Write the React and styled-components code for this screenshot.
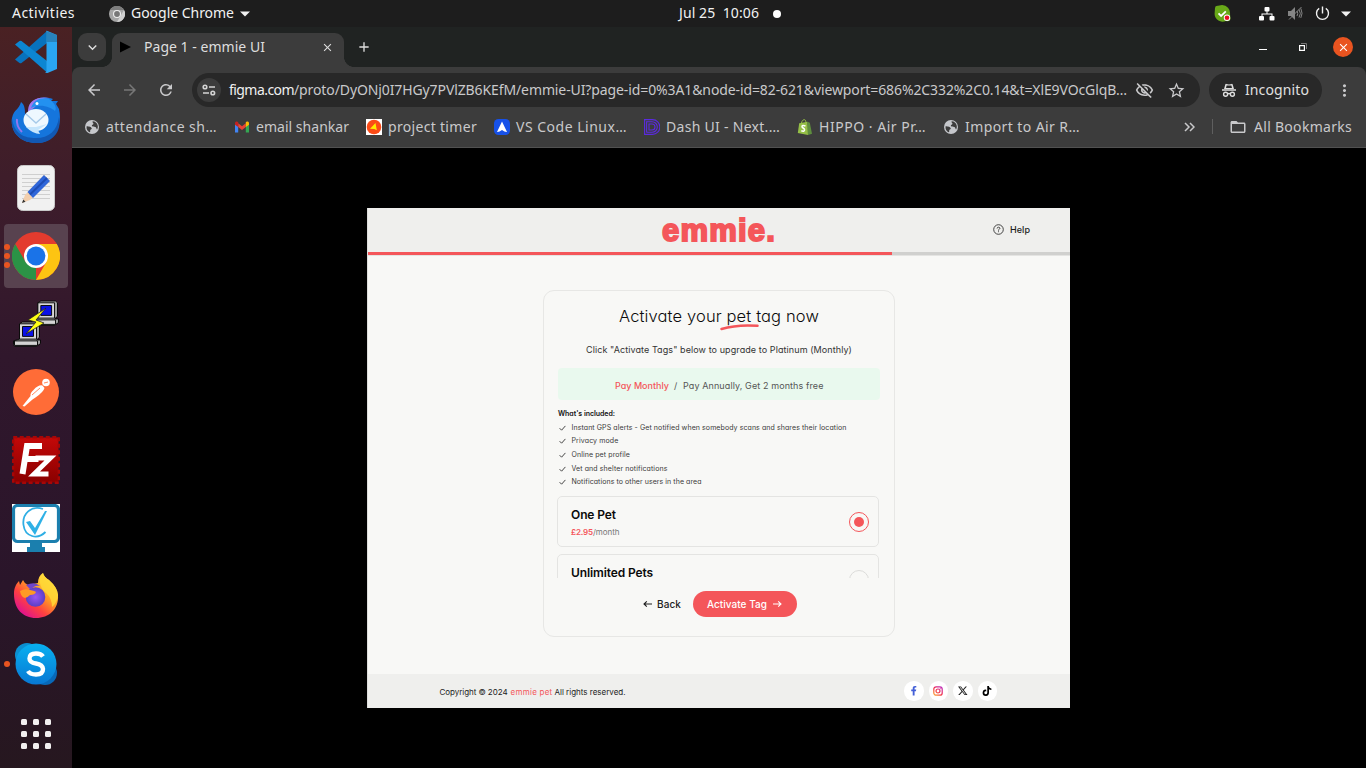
import React, { useLayoutEffect, useRef, useState } from 'react';
import styled, { createGlobalStyle } from 'styled-components';
import {
  MdArrowBack, MdArrowForward, MdRefresh, MdStarBorder, MdMoreVert, MdOutlineVisibilityOff,
  MdFolderOpen, MdAdd, MdClose, MdKeyboardArrowDown,
} from 'react-icons/md';
import { FaFacebookF, FaTiktok } from 'react-icons/fa';
import { BsTwitterX } from 'react-icons/bs';

const Global = createGlobalStyle`
  * { box-sizing: border-box; }
  body { margin: 0; background: #000; overflow: hidden; }
  svg { display: block; flex: none; }
`;

const SYSTEM = '"Noto Sans", "Open Sans", sans-serif';
const APP = 'Inter, "Liberation Sans", sans-serif';
const RED = '#f4565a';

/* ---------- text that tracks itself out to a given measure ---------- */
const Measure = styled.span`
  display: block;
  flex: none;
  width: ${(p) => p.$w}px;
  margin-left: ${(p) => p.$ml || 0}px;
  white-space: pre;
  font-size: ${(p) => p.$size}px;
  font-weight: ${(p) => p.$weight || 400};
  color: ${(p) => p.$color || 'inherit'};
`;

function Text({ w, size = 14, weight, color, ml, children }) {
  const ref = useRef(null);
  const [spacing, setSpacing] = useState(0);
  useLayoutEffect(() => {
    const natural = ref.current.getBoundingClientRect().width;
    setSpacing((w - natural) / children.length);
  }, [w, children]);
  return (
    <Measure $w={w} $size={size} $weight={weight} $color={color} $ml={ml}>
      <span ref={ref} style={{ letterSpacing: spacing }}>{children}</span>
    </Measure>
  );
}

/* ---------- desktop ---------- */
const Desktop = styled.div`
  width: 1366px;
  height: 768px;
  display: flex;
  flex-direction: column;
  overflow: hidden;
  background: #000;
  font-family: ${SYSTEM};
`;
const TopBar = styled.header`
  height: 27px;
  flex: none;
  display: flex;
  align-items: center;
  padding: 0 15px 0 12px;
  background: #1d1d1d;
  color: #f2f2f2;
  ${Measure} { padding-bottom: 2px; }
`;
const AppMenu = styled.div`
  display: flex;
  align-items: center;
  gap: 6px;
  margin-left: 34px;
`;
const Clock = styled.div`
  display: flex;
  align-items: center;
  margin-left: 429px;
`;
const Dot = styled.i`
  width: 8px;
  height: 8px;
  border-radius: 50%;
  background: #fff;
  margin-left: 14px;
`;
const Tray = styled.div`
  display: flex;
  align-items: center;
  margin-left: auto;
`;
const TrayItem = styled.div`margin-left: ${(p) => p.$gap}px;`;
const Main = styled.div`
  display: flex;
  flex: 1;
  min-height: 0;
`;

/* ---------- dock ---------- */
const Dock = styled.nav`
  width: 72px;
  flex: none;
  display: flex;
  flex-direction: column;
  align-items: center;
  gap: 4px;
  overflow: hidden;
  background: linear-gradient(#4a2123 0, #421f28 90px, #3a1b2c 210px, #30172c 330px, #2a152a 560px, #26171f 741px);
`;
const DockItem = styled.div`
  position: relative;
  width: 64px;
  height: 64px;
  flex: none;
  display: flex;
  align-items: center;
  justify-content: center;
  border-radius: 4px;
  background: ${(p) => (p.$active ? '#58424f' : 'transparent')};
  &:first-child { margin-top: -7px; }
  &:last-child { margin-top: 2px; }
`;
const Running = styled.div`
  position: absolute;
  left: 0;
  top: 0;
  height: 64px;
  display: flex;
  flex-direction: column;
  justify-content: center;
  gap: 3px;
  i { width: 6px; height: 6px; border-radius: 50%; background: #e95420; }
`;
const AppsGrid = styled.div`
  display: grid;
  grid-template-columns: repeat(3, 6px);
  gap: 6px;
  i { width: 6px; height: 6px; border-radius: 1.5px; background: #f2f0f0; }
`;

/* ---------- browser ---------- */
const Browser = styled.section`
  flex: 1;
  min-width: 0;
  display: flex;
  flex-direction: column;
  background: #202322;
  color: #c9c9cb;
`;
const TabStrip = styled.div`
  height: 40px;
  flex: none;
  display: flex;
  align-items: flex-end;
  padding-left: 6px;
  color: #dedede;
  ${Measure} { padding-bottom: 2px; }
`;
const TabSearch = styled.div`
  width: 28px;
  height: 28px;
  margin-bottom: 6px;
  border-radius: 9px;
  display: flex;
  align-items: center;
  justify-content: center;
  background: #3c3c3c;
`;
const Tab = styled.div`
  position: relative;
  width: 232px;
  height: 34px;
  margin-left: 6px;
  padding: 0 10px 6px 8px;
  border-radius: 9px 9px 0 0;
  display: flex;
  align-items: center;
  background: #3c3c3c;
  &::before, &::after {
    content: '';
    position: absolute;
    bottom: 0;
    width: 10px;
    height: 10px;
  }
  &::before { left: -10px; background: radial-gradient(circle at 0 0, transparent 9.6px, #3c3c3c 10.2px); }
  &::after { right: -10px; background: radial-gradient(circle at 100% 0, transparent 9.6px, #3c3c3c 10.2px); }
`;
const TabClose = styled.div`margin-left: auto;`;
const NewTab = styled.div`margin: 0 0 12px 12px;`;
const WindowControls = styled.div`
  display: flex;
  align-items: center;
  height: 40px;
  margin-left: auto;
  padding-right: 13px;
`;
const CloseWindow = styled.div`
  width: 20px;
  height: 20px;
  margin-left: 26px;
  border-radius: 50%;
  display: flex;
  align-items: center;
  justify-content: center;
  background: #e95420;
  color: #fff;
`;
const Chrome = styled.div`
  flex: none;
  height: 81px;
  background: #3c3c3c;
  border-radius: 8px 8px 0 0;
  border-bottom: 1px solid #515151;
  ${Measure} { padding-bottom: 2px; }
`;
const Toolbar = styled.div`
  height: 46px;
  display: flex;
  align-items: center;
  padding: 0 10px 0 13px;
`;
const NavButtons = styled.div`
  display: flex;
  gap: 18px;
  width: 107px;
  flex: none;
`;
const Omnibox = styled.div`
  width: 1008px;
  flex: none;
  height: 34px;
  border-radius: 17px;
  display: flex;
  align-items: center;
  padding: 0 14px 0 5px;
  background: #282828;
`;
const SiteInfo = styled.div`
  width: 24px;
  height: 24px;
  margin-right: 8px;
  border-radius: 50%;
  display: flex;
  align-items: center;
  justify-content: center;
  background: #3c3c3c;
`;
const OmniActions = styled.div`
  display: flex;
  align-items: center;
  gap: 13px;
  margin-left: auto;
`;
const Incognito = styled.div`
  width: 113px;
  flex: none;
  height: 34px;
  margin: 0 13px 0 9px;
  padding-left: 12px;
  border-radius: 17px;
  display: flex;
  align-items: center;
  gap: 8px;
  background: #282828;
  color: #e0e0e0;
`;
const BookmarkBar = styled.div`
  height: 28px;
  display: flex;
  align-items: center;
  padding: 0 14px 1px 12px;
  ${Measure} { padding-bottom: 1px; }
`;
const Bookmark = styled.div`
  display: flex;
  align-items: center;
  gap: 6px;
  margin-right: 17px;
  svg { width: 16px; height: 16px; }
`;
const BookmarkEnd = styled.div`
  display: flex;
  align-items: center;
  margin-left: auto;
`;
const Divider = styled.i`
  width: 1.5px;
  height: 15px;
  margin: 0 16px 0 17px;
  background: #5f5f5f;
`;
const Viewport = styled.div`
  flex: 1;
  background: #000;
  padding: 60px 0 0 295px;
`;

/* ---------- emmie page ---------- */
const Page = styled.article`
  width: 703px;
  height: 500px;
  display: flex;
  flex-direction: column;
  background: #f8f8f6;
  color: #1c1c1c;
  font-family: ${APP};
  font-feature-settings: 'cv11' 1;
  border-left: 1px solid #dededc;
`;
const PageHeader = styled.header`
  height: 44px;
  flex: none;
  display: grid;
  grid-template-columns: 1fr 114px 1fr;
  align-items: center;
  background: #efefed;
`;
const Logo = styled.div`
  grid-column: 2;
  line-height: 30px;
  padding-top: 1px;
  font-family: "Liberation Sans", Arial, sans-serif;
  color: ${RED};
  -webkit-text-stroke: 1.9px ${RED};
`;
const Help = styled.div`
  display: flex;
  align-items: center;
  justify-self: end;
  gap: 6px;
  padding: 0 40px 1px 0;
`;
const Progress = styled.div`
  height: 4px;
  flex: none;
  background: #d0d0ce;
  border-bottom: 1px solid #e4e4e2;
`;
const ProgressFill = styled.div`
  width: 524px;
  height: 3px;
  background: ${RED};
`;
const Content = styled.main`
  flex: 1;
  display: flex;
  justify-content: center;
  padding-top: 34px;
`;
const Card = styled.div`
  width: 352px;
  height: 347px;
  padding: 0 14px;
  border: 1px solid #e7e7e5;
  border-radius: 11px;
  display: flex;
  flex-direction: column;
`;
const Title = styled.h1`
  position: relative;
  align-self: center;
  margin: 14px 0 0;
  line-height: 22px;
  color: #0b0b0b;
  svg { position: absolute; left: 101px; top: 18px; }
`;
const Subtitle = styled.p`
  align-self: center;
  margin: 16px 0 0;
  line-height: 14px;
  color: #333;
`;
const Billing = styled.div`
  height: 32px;
  flex: none;
  margin: 11px 0 0;
  border-radius: 4px;
  display: flex;
  align-items: center;
  padding: 2px 0 0 57px;
  background: #e9f9ee;
  color: #555;
`;
const Included = styled.ul`
  list-style: none;
  margin: 7px 0 0;
  padding: 0;
`;
const IncludedItem = styled.li`
  height: 13.7px;
  line-height: 13.7px;
  display: flex;
  align-items: center;
  color: #3a3a3a;
  svg { margin: 0 5.5px 0 1px; }
`;
const Plans = styled.div`
  height: 82px;
  margin: 7px 1px 0 -1px;
  overflow: hidden;
  flex: none;
`;
const Plan = styled.div`
  height: 51px;
  margin-bottom: 7px;
  padding: 0 9px 0 13px;
  border: 1px solid #e4e4e2;
  border-radius: 5px;
  display: flex;
  align-items: center;
  justify-content: space-between;
`;
const PlanInfo = styled.div`
  height: 32px;
  font-feature-settings: normal;
`;
const PlanName = styled.div`
  padding-top: 1px;
  line-height: 16px;
  color: #0a0a0a;
`;
const PlanPrice = styled.div`
  display: flex;
  margin-top: 3px;
  line-height: 12px;
  color: #777;
`;
const Radio = styled.div`
  width: 20px;
  height: 20px;
  border-radius: 50%;
  border: 1.4px solid ${(p) => (p.$on ? RED : '#dcdcda')};
  display: flex;
  align-items: center;
  justify-content: center;
  &::after {
    content: '';
    width: 10px;
    height: 10px;
    border-radius: 50%;
    background: ${(p) => (p.$on ? RED : 'transparent')};
  }
`;
const Actions = styled.div`
  display: flex;
  align-items: center;
  margin: 13px 0 0 85px;
  font-feature-settings: normal;
`;
const BackButton = styled.div`
  display: flex;
  align-items: center;
  gap: 5px;
`;
const Activate = styled.div`
  width: 104px;
  height: 26px;
  margin-left: 12px;
  padding-left: 14px;
  border-radius: 13px;
  display: flex;
  align-items: center;
  gap: 6px;
  background: ${RED};
  color: #fff;
`;
const PageFooter = styled.footer`
  height: 34px;
  flex: none;
  display: flex;
  align-items: center;
  justify-content: space-between;
  padding: 0 73px 0 71.5px;
  background: #efefed;
`;
const Copyright = styled.div`
  display: flex;
  padding-top: 1px;
  color: #222;
`;
const Socials = styled.div`display: flex; gap: 5px;`;
const Social = styled.div`
  width: 19.5px;
  height: 19.5px;
  border-radius: 50%;
  display: flex;
  align-items: center;
  justify-content: center;
  background: #fff;
  color: ${(p) => p.$color};
`;

/* ---------- drawings ---------- */
const Caret = () => <svg width="10" height="6"><path d="M0 .5h10L5 5.5z" fill="#f2f2f2" /></svg>;

const ChromeGrey = () => (
  <svg width="16" height="16" viewBox="0 0 16 16">
    <circle cx="8" cy="8" r="8" fill="#a5a5a5" />
    <path d="M1 4a8 8 0 0 1 14 0H8z" fill="#7d7d7d" />
    <path d="M15 4a8 8 0 0 1-7 12l3.5-6z" fill="#d0d0d0" />
    <circle cx="8" cy="8" r="4" fill="#eee" /><circle cx="8" cy="8" r="2.9" fill="#777" />
  </svg>
);
const SkypeTray = () => (
  <svg width="17" height="17" viewBox="0 0 17 17">
    <path d="M1 3Q1 .5 4 .7L8 0a8 8 0 0 1 8 9l.5 5Q16 17 12 16A8 8 0 0 1 .6 9z" fill="#68a818" />
    <path d="M4.5 8.3l2.6 2.6 4.7-4.5" stroke="#fff" strokeWidth="1.8" fill="none" />
    <circle cx="13" cy="12.8" r="3.2" fill="#fff" /><circle cx="13" cy="12.8" r="2.3" fill="#e81123" />
  </svg>
);
const Network = () => (
  <svg width="16" height="14" fill="#fff">
    <rect x="5.5" y="0" width="5" height="4.4" rx="1" /><rect x="0" y="9" width="5" height="4.4" rx="1" /><rect x="10.5" y="9" width="5" height="4.4" rx="1" />
    <path d="M7.5 4h1v2.5h5V10h-1V7.5h-9V10h-1V6.5h5z" />
  </svg>
);
const Muted = () => (
  <svg width="15" height="15" fill="none" stroke="#858585">
    <path d="M0 5h3l4-4v13L3 10H0z" fill="#858585" stroke="none" />
    <path d="M1 13.5L13.5 1" strokeWidth="1" /><path d="M9 5q1.5 2.5 0 5M11 3.5q2.7 4 0 8M12.8 2.4q2.5 5 0 9.5" />
  </svg>
);
const Power = () => (
  <svg width="15" height="15" fill="none" stroke="#f2f2f2" strokeWidth="1.4">
    <path d="M4.2 2.4a6 6 0 1 0 6.6 0M7.5 .4v7" />
  </svg>
);
const Minimise = () => <svg width="8" height="6"><path d="M0 5.5h8" stroke="#fff" /></svg>;
const Restore = () => (
  <svg width="8" height="9" fill="none">
    <path d="M2 .5h5.5V6" stroke="#777" /><rect x=".6" y="2.6" width="4.8" height="4.8" stroke="#fff" strokeWidth="1.2" />
  </svg>
);
const SiteSettings = () => (
  <svg width="14" height="12" fill="none" stroke="#d4d4d4" strokeWidth="1.6">
    <circle cx="3" cy="3" r="1.8" /><path d="M7 3h6M1 9h6" /><circle cx="10.8" cy="9" r="1.8" />
  </svg>
);
const Spy = () => (
  <svg width="16" height="15" viewBox="0 0 16 15">
    <path d="M3 6L4.3 1.4Q4.6.6 5.4.9L8 1.6l2.6-.7q.8-.3 1.1.5L13 6z" fill="#dedede" />
    <path d="M5 5L5.6 2.6h4.8L11 5z" fill="#282828" /><path d="M1 7h14" stroke="#dedede" strokeWidth="1.5" />
    <g fill="none" stroke="#dedede" strokeWidth="1.4"><circle cx="4.6" cy="11.3" r="2" /><circle cx="11.4" cy="11.3" r="2" /><path d="M6.6 11q1.4-.9 2.8 0" /></g>
  </svg>
);
const Globe = () => (
  <svg viewBox="0 0 16 16">
    <circle cx="8" cy="8" r="7" fill="#c5c7cb" />
    <path d="M2.6 7.2c2 .2 5 .3 5.2 2.4 0 1-1.6.8-1.6 2 0 1 .1 1.8-.6 1.6A5.8 5.8 0 0 1 2.6 7.2zM8.6 2.3c2.5.1 4.6 1.8 5.1 4.2.3 1.6 0 3-.7 3.9-.8-.3-.4-1.9-1.6-2.3-1.5-.4-3.4-.3-3.6-1.6-.1-1 1.7-.7 1.7-1.8 0-.9-1.3-.7-.9-2.4z" fill="#3c3c3c" />
  </svg>
);
const Gmail = () => (
  <svg viewBox="0 0 16 16">
    <path d="M1 4v9.5h3.2V7.2z" fill="#4285f4" /><path d="M15 4v9.5h-3.2V7.2z" fill="#34a853" />
    <path d="M4.2 4.2L8 7.2l3.8-3v3.9L8 11 4.2 8.1z" fill="#ea4335" />
    <path d="M1 4.2C1 2.3 3 2 4.2 3v5.1L1 5.7z" fill="#c5221f" /><path d="M15 4.2C15 2.3 13 2 11.8 3v5.1L15 5.7z" fill="#fbbc04" />
  </svg>
);
const Timer = () => (
  <svg viewBox="0 0 16 16"><path d="M0 0h16v16H0z" fill="#fff" /><circle cx="8" cy="8" r="7.3" fill="#fb4b16" /><path d="M9.5 4l1.3 7.3-2.5-1.2-4.3-.4z" fill="#ffea00" /></svg>
);
const ArrowBlue = () => (
  <svg viewBox="0 0 16 16"><rect width="16" height="16" rx="4.5" fill="#1751e8" /><path d="M8 2.5l5 10.5q-2.2.2-5-2-2.8 2.2-5 2z" fill="#fff" /></svg>
);
const DashD = () => (
  <svg viewBox="0 0 16 16" fill="none" stroke="#5b2be0" strokeWidth="1.1">
    <path d="M0 .6h8.5a7.3 7.3 0 0 1 0 14.8H.6V.6M2.6 13.4V2.7H8a5.3 5.3 0 0 1 0 10.6H2.6M5 11V5h3a3 3 0 0 1 0 6z" />
  </svg>
);
const Bag = () => (
  <svg viewBox="0 0 16 16">
    <path d="M2.2 4.3l8.3-1.5L11 16 .8 14z" fill="#95bf47" /><path d="M10.5 2.8l2.3 1L15 14.8 11 16z" fill="#5e8e3e" />
    <path d="M4.3 4.5C4.8 1.5 6.5.3 7.8.8c1 .5 1 1.5 1 2.7" fill="none" stroke="#95bf47" strokeWidth="1" />
    <path d="M8.5 7Q5 5.7 5 7.7c0 1.3 2.7 1.4 2.6 3.2Q7.2 13 4.3 11.8" fill="none" stroke="#fff" strokeWidth="1.5" />
  </svg>
);
const Chevrons = () => <svg width="11" height="10" fill="none" stroke="#c9c9cb" strokeWidth="1.5"><path d="M1 1l4 4-4 4M6 1l4 4-4 4" /></svg>;

const VSCode = () => (
  <svg width="44" height="44" viewBox="0 0 44 44">
    <path d="M1 29.5L33 1v12L7.5 33q-1 .6-2 0z" fill="#0872bd" />
    <path d="M1 14.5L5.5 11q1-.6 2 0L33 31v11.5z" fill="#0c86d2" />
    <path d="M32 1q.5-.4 1.5 0L43 5v34l-9.5 4q-1.5.3-2.5-1 1.5.5 1.5-1.5v-38Q32.5 1 32 1z" fill="#2aa5f1" />
    <path d="M32 1l11 4v7H32.5z" fill="#2875a6" opacity=".7" />
  </svg>
);
const Thunderbird = () => (
  <svg width="50" height="50" viewBox="0 -1 50 50">
    <path d="M1 22C3 13 8 14 10 6c4 3 4 8 4 12l4-3C19 3 29-1 42 3l-2 2 7 0-2 3 3 5c4 18-5 34-22 34C9 47-1 36 1 22z" fill="#1575dc" />
    <path d="M1 22c2 16 12 20 24 20 13 0 21-7 23-21 3 15-7 26-22 26C9 47-1 36 1 22z" fill="#1258b3" />
    <path d="M17 14C18 3 28 0 39 2c-7 0-12 3-15 9l-7 5z" fill="#9b78ed" /><path d="M20 12C23 3 31 1 38 3c6 4 8 9 6 12-4-4-15-8-24-3z" fill="#2391f0" />
    <circle cx="26" cy="7.5" r="1.5" fill="#fff" /><path d="M6 23q-1 7 5 13" stroke="#9177ed" strokeWidth="2" fill="none" />
    <ellipse cx="25" cy="24" rx="12.5" ry="11" fill="#eef8ff" /><path d="M15 31q7 7 14 7l-2-4 9-6-11 3z" fill="#c5e5fc" /><path d="M15 18l10 9 10-9" fill="none" stroke="#a6c9e8" strokeWidth="1.4" />
  </svg>
);
const Editor = () => (
  <svg width="38" height="46" viewBox="0 0 38 46">
    <rect x=".5" y=".5" width="37" height="45" rx="5" fill="#f1f1f1" stroke="#c8c8c8" />
    <path d="M5 9.5h28M5 13.5h28M5 17.5h28M5 21.5h28M5 25.5h28M5 29.5h28M5 33.5h28" stroke="#cfcfcf" />
    <path d="M5 38l3-8 19-20 6 6-20 19z" fill="#f2cfae" /><path d="M10.500 27L27 10l6 6-17 17z" fill="#2f66d9" /><path d="M13 29.5L30 13" stroke="#1d4cb5" strokeWidth="2" /><path d="M5 38l1.3-3.5 2.2 2.2z" fill="#333" />
  </svg>
);
const ChromeIcon = () => (
  <svg width="48" height="48" viewBox="0 0 48 48">
    <circle cx="24" cy="24" r="24" fill="#e33b2e" />
    <path d="M3.2 12L13.6 30 24 36v12A24 24 0 0 1 3.2 12z" fill="#2b9346" />
    <path d="M24 12h20.8A24 24 0 0 1 24 48l10.4-18z" fill="#fdc412" />
    <circle cx="24" cy="24" r="12" fill="#fff" /><circle cx="24" cy="24" r="9.4" fill="#1a73e8" />
  </svg>
);
const Putty = () => {
  const pc = (
    <g stroke="#050505" strokeWidth="1">
      <path d="M6 2l3-2h15l2 2v15l-3 3 4 0v4l-4 3H1l-1-2v-4l6-2z" fill="#a2a2a2" />
      <path d="M6 2h17v17H6z" fill="#d8d8d8" /><path d="M9 5h11v11H9z" fill="#0b12e6" /><path d="M1 21h23v5H1z" fill="#d4d4d4" />
    </g>
  );
  return (
    <svg width="48" height="48" viewBox="0 0 48 48">
      <g transform="translate(20 1) scale(.98 .9)">{pc}</g><g transform="translate(1.500 22) scale(1 .9)">{pc}</g>
      <path d="M34 8L16 20l8 2-10 12 18-11-8-3z" fill="#ffff14" stroke="#222" strokeWidth=".8" />
    </svg>
  );
};
const Postman = () => (
  <svg width="46" height="46" viewBox="0 0 46 46">
    <circle cx="23" cy="23" r="23" fill="#ff6c37" />
    <circle cx="33" cy="13.5" r="3.800" fill="#fff" /><path d="M9.5 37l8-10q-.5-3 3-6 5-5.500 9-4.500l2 2.500q-1 4-9 9.500l-3 2-8 7z" fill="#fff" />
    <path d="M19 26l8-7M31 14l4-1" stroke="#ff6c37" strokeWidth=".8" />
  </svg>
);
const Filezilla = () => (
  <svg width="48" height="48" viewBox="0 0 48 48">
    <defs><linearGradient id="fz" x2="0" y2="1"><stop stopColor="#c30808" /><stop offset="1" stopColor="#8a0000" /></linearGradient></defs>
    <rect x="1.5" y="1.5" width="45" height="45" fill="url(#fz)" />
    <rect x="1.2" y="1.2" width="45.6" height="45.6" fill="none" stroke="#a80606" strokeWidth="2.4" strokeDasharray="4 2.52" />
    <path d="M10.5 38L15 10h15M13.5 23h13" fill="none" stroke="#fff" strokeWidth="6" />
    <path d="M23.5 22h15L22 38h14.500" fill="none" stroke="#fff" strokeWidth="4.8" />
  </svg>
);
const Monitor = () => (
  <svg width="48" height="48" viewBox="0 0 48 48">
    <path d="M0 0h48v48H0z" fill="#fff" /><rect x="1.5" y="1.5" width="45" height="36" rx="4" fill="#fff" stroke="#1b7fae" strokeWidth="3.2" />
    <path d="M18 38h12v5h3v5H15v-5h3z" fill="#1b7fae" />
    <path d="M31 5C19 1 10 10 11.5 21c1.5 12 14 15 22 7" fill="none" stroke="#2eaee4" strokeWidth="1.8" /><path d="M14 18l4-1 5 7 10-17 2 0-12 24z" fill="#2fb1e6" />
  </svg>
);
const Firefox = () => (
  <svg width="46" height="46" viewBox="0 1 46 46">
    <defs>
      <linearGradient id="ff" x1=".85" y1=".1" x2=".2" y2=".9"><stop stopColor="#fff04a" /><stop offset=".4" stopColor="#ff9d25" /><stop offset=".7" stopColor="#ff4140" /><stop offset="1" stopColor="#e0158a" /></linearGradient>
      <radialGradient id="fp"><stop stopColor="#9a55f5" /><stop offset="1" stopColor="#5a3fc4" /></radialGradient>
    </defs>
    <path d="M1 22C1 16 3 12 6 9l1 4 3-5q1 3 5 5l10-2q0-7 5-10 1 4 6 7 8 7 9 15C46 37 36 46 23 46S1 37 1 22z" fill="url(#ff)" />
    <circle cx="22.5" cy="25" r="9.8" fill="url(#fp)" />
    <path d="M7 19q5-3 10-1 5 1 6 2-1 3-6 3-3 3-5 3-4-1-5-7z" fill="#ff9a24" /><path d="M13 13q9-4 14 1-6-1-9 4z" fill="#6e45cc" />
    <path d="M27 11Q26 5 30 1q1 4 6 7 9 8 9 15-1 8-6 12 0-9-6-14-5-4-6-10z" fill="#ffd836" opacity=".85" />
  </svg>
);
const Skype = () => (
  <svg width="44" height="44" viewBox="0 0 44 44">
    <defs><linearGradient id="sk" x2="0" y2="1"><stop stopColor="#08b0f0" /><stop offset="1" stopColor="#0878d4" /></linearGradient></defs>
    <circle cx="13" cy="13" r="12" fill="#0b8fd0" /><circle cx="31" cy="31" r="12" fill="#0868b8" /><circle cx="22" cy="22" r="20.5" fill="url(#sk)" />
    <path d="M29 14.5q-2-3-7-3-6.500 0-6.500 5 0 4 6.500 5t7 5.500q0 5.500-7 5.500-6 0-8-3.500" fill="none" stroke="#fff" strokeWidth="4.4" />
  </svg>
);
const Check = () => <svg width="7" height="6"><path d="M.6 3.2l2 2L6.4.9" fill="none" stroke="#333" strokeWidth=".9" /></svg>;
const Arrow = ({ left }) => (
  <svg width="9" height="8" fill="none" stroke="currentColor" strokeWidth="1.1">
    <path d={left ? 'M9 4H1M3.8 1.3L1 4l2.8 2.7' : 'M0 4h8M5.2 1.3l2.8 2.7-2.8 2.7'} />
  </svg>
);
const Question = () => (
  <svg width="11" height="11" fill="none" stroke="#333" strokeWidth=".9">
    <circle cx="5.5" cy="5.5" r="4.8" /><path d="M4.1 4.500q.1-1.300 1.400-1.300t1.400 1.200Q6.900 5 5.500 5.800v.8M5.500 7.300v.9" />
  </svg>
);
const Instagram = () => (
  <svg width="10" height="10" viewBox="0 0 10 10" fill="none" stroke="url(#ig)" strokeWidth="1.2">
    <defs><linearGradient id="ig" gradientUnits="userSpaceOnUse" x1="1" y1="10" x2="9" y2="0"><stop stopColor="#ffb52e" /><stop offset=".5" stopColor="#f0264d" /><stop offset="1" stopColor="#b42fd0" /></linearGradient></defs>
    <rect x=".8" y=".8" width="8.4" height="8.4" rx="2.3" /><circle cx="5" cy="5" r="2" /><circle cx="7.5" cy="2.5" r=".2" />
  </svg>
);
const Swoosh = () => <svg width="40" height="8"><path d="M1.5 6Q17 1.3 37.5 2.8" fill="none" stroke={RED} strokeWidth="2.5" strokeLinecap="round" /></svg>;

/* ---------- data ---------- */
const dock = [
  { icon: <VSCode /> }, { icon: <Thunderbird /> }, { icon: <Editor /> },
  { icon: <ChromeIcon />, active: true, windows: 3 },
  { icon: <Putty /> }, { icon: <Postman /> }, { icon: <Filezilla /> }, { icon: <Monitor /> }, { icon: <Firefox /> },
  { icon: <Skype />, windows: 1 },
];
const bookmarks = [
  [<Globe />, 'attendance sh…', 111], [<Gmail />, 'email shankar', 93], [<Timer />, 'project timer', 89],
  [<ArrowBlue />, 'VS Code Linux…', 111], [<DashD />, 'Dash UI - Next.…', 114],
  [<Bag />, 'HIPPO · Air Pr…', 107], [<Globe />, 'Import to Air R…', 115],
];
const included = [
  ['Instant GPS alerts - Get notified when somebody scans and shares their location', 275],
  ['Privacy mode', 47], ['Online pet profile', 58.5], ['Vet and shelter notifications', 96], ['Notifications to other users in the area', 130],
];

export default function App() {
  return (
    <Desktop>
      <Global />
      <TopBar>
        <Text w={63}>Activities</Text>
        <AppMenu>
          <ChromeGrey />
          <Text w={103}>Google Chrome</Text>
          <Caret />
        </AppMenu>
        <Clock><Text w={80}>Jul 25  10:06</Text><Dot /></Clock>
        <Tray>
          <SkypeTray />
          <TrayItem $gap={28}><Network /></TrayItem>
          <TrayItem $gap={13}><Muted /></TrayItem>
          <TrayItem $gap={12}><Power /></TrayItem>
          <TrayItem $gap={11}><Caret /></TrayItem>
        </Tray>
      </TopBar>
      <Main>
        <Dock>
          {dock.map((d, i) => (
            <DockItem key={i} $active={d.active}>
              {d.windows && <Running>{Array.from({ length: d.windows }, (_, n) => <i key={n} />)}</Running>}
              {d.icon}
            </DockItem>
          ))}
          <DockItem><AppsGrid>{Array.from({ length: 9 }, (_, n) => <i key={n} />)}</AppsGrid></DockItem>
        </Dock>
        <Browser>
          <TabStrip>
            <TabSearch><MdKeyboardArrowDown size={17} /></TabSearch>
            <Tab>
              <svg width="11" height="12"><path d="M0 .5L11 6 0 11.5z" fill="#000" /></svg>
              <Text w={121} ml={13}>Page 1 - emmie UI</Text>
              <TabClose><MdClose size={13} /></TabClose>
            </Tab>
            <NewTab><MdAdd size={16} /></NewTab>
            <WindowControls>
              <Minimise />
              <TrayItem $gap={32}><Restore /></TrayItem>
              <CloseWindow><MdClose size={13} /></CloseWindow>
            </WindowControls>
          </TabStrip>
          <Chrome>
            <Toolbar>
              <NavButtons><MdArrowBack size={18} /><MdArrowForward size={18} color="#777" /><MdRefresh size={18} /></NavButtons>
              <Omnibox>
                <SiteInfo><SiteSettings /></SiteInfo>
                <Text w={65} color="#f0f0f0">figma.com</Text>
                <Text w={833}>/proto/DyONj0I7HGy7PVlZB6KEfM/emmie-UI?page-id=0%3A1&node-id=82-621&viewport=686%2C332%2C0.14&t=XlE9VOcGlqB…</Text>
                <OmniActions><MdOutlineVisibilityOff size={19} /><MdStarBorder size={19} /></OmniActions>
              </Omnibox>
              <Incognito><Spy /><Text w={64}>Incognito</Text></Incognito>
              <MdMoreVert size={19} />
            </Toolbar>
            <BookmarkBar>
              {bookmarks.map(([icon, label, w]) => (
                <Bookmark key={label}>{icon}<Text w={w}>{label}</Text></Bookmark>
              ))}
              <BookmarkEnd>
                <Chevrons /><Divider /><MdFolderOpen size={18} />
                <Text w={98} ml={7}>All Bookmarks</Text>
              </BookmarkEnd>
            </BookmarkBar>
          </Chrome>
          <Viewport>
            <Page>
              <PageHeader>
                <Logo><Text w={114} size={31} weight={700}>emmie.</Text></Logo>
                <Help><Question /><Text w={20} size={9} weight={500}>Help</Text></Help>
              </PageHeader>
              <Progress><ProgressFill /></Progress>
              <Content>
                <Card>
                  <Title><Text w={200} size={16.5} weight={350}>Activate your pet tag now</Text><Swoosh /></Title>
                  <Subtitle><Text w={266} size={9}>Click "Activate Tags" below to upgrade to Platinum (Monthly)</Text></Subtitle>
                  <Billing>
                    <Text w={54} size={9} weight={500} color={RED}>Pay Monthly</Text>
                    <Text w={4} ml={5} size={9}>/</Text>
                    <Text w={140.5} ml={5} size={9}>Pay Annually, Get 2 months free</Text>
                  </Billing>
                  <Included>
                    <IncludedItem><Text w={57} size={7} weight={600} color="#111">What's included:</Text></IncludedItem>
                    {included.map(([label, w]) => (
                      <IncludedItem key={label}><Check /><Text w={w} size={7}>{label}</Text></IncludedItem>
                    ))}
                  </Included>
                  <Plans>
                    <Plan>
                      <PlanInfo>
                        <PlanName><Text w={45} size={12} weight={600}>One Pet</Text></PlanName>
                        <PlanPrice><Text w={22} size={8} weight={600} color={RED}>£2.95</Text><Text w={26.5} size={8}>/month</Text></PlanPrice>
                      </PlanInfo>
                      <Radio $on />
                    </Plan>
                    <Plan>
                      <PlanInfo>
                        <PlanName><Text w={82} size={12} weight={600}>Unlimited Pets</Text></PlanName>
                      </PlanInfo>
                      <Radio />
                    </Plan>
                  </Plans>
                  <Actions>
                    <BackButton><Arrow left /><Text w={24} size={10} weight={500}>Back</Text></BackButton>
                    <Activate><Text w={60} size={10} weight={500}>Activate Tag</Text><Arrow /></Activate>
                  </Actions>
                </Card>
              </Content>
              <PageFooter>
                <Copyright>
                  <Text w={68} size={8}>Copyright © 2024</Text>
                  <Text w={42} ml={3} size={8} color={RED}>emmie pet</Text>
                  <Text w={71} ml={2} size={8}>All rights reserved.</Text>
                </Copyright>
                <Socials>
                  <Social $color="#4460d8"><FaFacebookF size={9.5} /></Social>
                  <Social><Instagram /></Social>
                  <Social $color="#222"><BsTwitterX size={9.5} /></Social>
                  <Social $color="#000"><FaTiktok size={10} /></Social>
                </Socials>
              </PageFooter>
            </Page>
          </Viewport>
        </Browser>
      </Main>
    </Desktop>
  );
}
